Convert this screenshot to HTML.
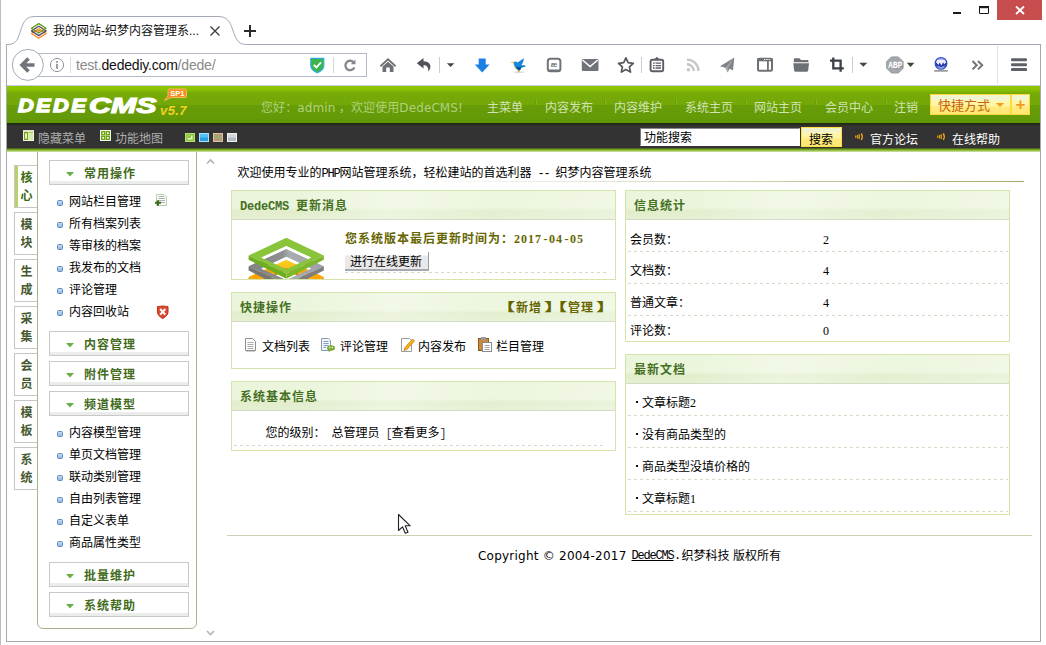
<!DOCTYPE html>
<html lang="zh-CN">
<head>
<meta charset="utf-8">
<title>我的网站-织梦内容管理系统 V57_UTF8_SP1</title>
<style>
*{box-sizing:border-box;margin:0;padding:0}
html,body{width:1046px;height:645px;overflow:hidden;background:#fff}
body{position:relative;font-family:"Liberation Sans","Noto Sans CJK SC",sans-serif;font-size:12px;color:#000;line-height:14px}
.a{position:absolute}
.t{position:absolute;white-space:nowrap;line-height:14px;height:14px}
a{color:inherit;text-decoration:none}
/* ---------- browser chrome ---------- */
#edgeL{left:0;top:0;width:1px;height:645px;background:#bdbdbd}
#winL{left:6px;top:44px;width:1px;height:598px;background:#a6aab0}
#winR{left:1040px;top:44px;width:1px;height:598px;background:#a6aab0}
#winB{left:6px;top:641px;width:1035px;height:1px;background:#a6aab0}
#navline{left:7px;top:85px;width:1033px;height:1px;background:#cdcde0}
#urlbar{left:30px;top:53px;width:337px;height:24px;border:1px solid #b4bcc8;background:#fff}
#tabtitle{left:53px;top:24px;font-size:12px;color:#111}
#url{left:76px;top:56px;font-size:14px;letter-spacing:-0.2px;line-height:18px;height:18px;color:#8a8a8a;font-family:"Liberation Sans",sans-serif}
#url b{font-weight:normal;color:#111}
/* ---------- page header ---------- */
#hd{left:7px;top:86px;width:1033px;height:37px;background:linear-gradient(#8ec700 0,#8cc400 3px,#7db205 6px,#75aa07 7px,#73a807 18.500px,#689d08 19.500px,#659a08 30px,#609508 37px)}
#bar{left:7px;top:123px;width:1033px;height:26px;background:linear-gradient(#212d0a 0,#222a12 1px,#2a2e22 2px,#333 3px,#333 100%)}
#barline{left:7px;top:148px;width:1033px;height:4px;background:linear-gradient(#3c5512,#86b52c 50%,#d5e8ae)}
.nav{color:#d3e4b4;font-size:12px;top:101px}
.navsep{top:99px;width:2px;height:6px;background:linear-gradient(90deg,#679c0a 50%,#82b51e 50%)}
.bart{top:133px;color:#fff}
.barg{top:132px;color:#adadad}

#logo1{left:18px;top:95px;height:22px;line-height:22px;font-size:18.500px;font-weight:bold;font-style:italic;color:#fff;-webkit-text-stroke:1.300px #fff;letter-spacing:2px;font-family:"Liberation Sans",sans-serif;transform:scaleX(1.180);transform-origin:0 0}
#logo2{left:89px;top:93px;height:26px;line-height:26px;font-size:22px;font-weight:bold;font-style:italic;color:#fff;-webkit-text-stroke:1.200px #fff;letter-spacing:0;font-family:"Liberation Sans",sans-serif;transform:scaleX(1.380);transform-origin:0 0}
#ver{left:160px;top:103px;height:15px;line-height:15px;font-size:13px;font-weight:bold;font-style:italic;color:#f4d21a;letter-spacing:0.400px;font-family:"Liberation Sans",sans-serif}
#hello{left:261px;top:101px;color:#b0d27c;letter-spacing:0.100px}
.vd{font-family:"DejaVu Sans","Liberation Sans",sans-serif}
.qk{top:94px;height:21px;border:1px solid #ffd83b;background:linear-gradient(#f2f3cf 0,#f2f3cf 5px,#fff7ae 6px,#fff3a0 11px,#ffe97c 12px,#ffe774 21px)}
#qkt{left:938px;top:99px;font-size:13px;color:#c8640c}
#qkarrow{left:996px;top:103px;width:0;height:0;border-left:4px solid transparent;border-right:4px solid transparent;border-top:4.500px solid #f39a1e}
#qkplus{left:1015.500px;top:97px;font-size:17px;line-height:16px;height:16px;font-weight:bold;color:#f39a1e;font-family:"Liberation Sans",sans-serif}
#sinput{left:640px;top:128px;width:160px;height:18px;background:#fff;border:1px solid #fff;border-left-color:#777;border-top-color:#8a8a8a}
#sinputt{left:644px;top:131px}
#sbtn{left:801px;top:127px;width:41px;height:20px;border:1px solid #ffdf47;background:linear-gradient(#eff2cd 0,#eff2cd 4px,#fff6ac 5px,#fff2a0 10px,#ffe97c 11px,#ffe670 20px)}
#sbtnt{left:809px;top:133px}
/* ---------- sidebar ---------- */
.tab{left:14px;width:23px;height:43px;border:1px solid #c6c6c6;border-right:none;background:#fff;color:#46582f;font-weight:bold;font-size:12px;line-height:18px;text-align:center;padding-top:3px;padding-left:1px;font-family:"Liberation Sans","Noto Sans CJK SC",sans-serif}
.tab.on{border-left:1px solid #c6c6c6;box-shadow:inset 3px 0 0 #b5d36a;color:#3a6a12}
#menu{left:37px;top:140px;width:160px;height:489px;border:1px solid #a8b48e;border-radius:0 0 6px 6px;background:#fff}
.mt{left:49px;width:140px;height:25px;border:1px solid #c9c9c9;background:linear-gradient(#fff 0,#fff 20px,#ebedeb 20px,#ebedeb 23px)}
.mt b{position:absolute;left:34px;top:6px;line-height:14px;font-size:12px;letter-spacing:1px;color:#436b1b;font-family:"Liberation Sans","Noto Sans CJK SC",sans-serif;font-weight:bold;white-space:nowrap}
.mt i{position:absolute;left:16px;top:11px;width:8px;height:4.500px;background:#6aae48;clip-path:polygon(0 0,100% 0,50% 100%)}
.mi{left:69px}
.bu{left:57px;width:6px;height:6px;border:1px solid #5f86b8;border-radius:1.500px;background:linear-gradient(#c4dcf7,#8fb8ea)}
/* ---------- main ---------- */
.pn{border:1px solid #d3e5ab;background:#fff}
.ph{left:0;top:0;right:0;height:29px;border-bottom:1px solid #d3dcc4;background:linear-gradient(115deg,rgba(255,255,255,0) 0,rgba(255,255,255,0) 18%,rgba(255,255,255,.350) 42%,rgba(255,255,255,.080) 68%,rgba(255,255,255,.300) 100%),linear-gradient(#ebf5dc 0,#ebf5dc 60%,#e1edcb 72%,#e4f0d1 100%)}
.ph b{position:absolute;left:8px;top:8px;line-height:14px;font-size:12px;letter-spacing:1px;color:#45701f;font-family:"Liberation Sans","Noto Sans CJK SC",sans-serif;font-weight:bold;white-space:nowrap}
.ph b.ol{color:#666600}
.ph b.lb{letter-spacing:0;transform:scaleX(1.800);transform-origin:11px 0}
.ph b.rb{letter-spacing:0;transform:scaleX(1.800);transform-origin:0.500px 0}
.sd{font-family:"Liberation Serif",serif;font-size:12px}
.sdb{font-family:"Liberation Serif",serif;font-size:12px;font-weight:bold;letter-spacing:1px}
.sdb i{display:inline-block;width:7px;text-align:center;font-style:normal;letter-spacing:0}
.dash{height:1px;background:repeating-linear-gradient(90deg,#d3dbc5 0,#d3dbc5 3px,transparent 3px,transparent 6px)}

#welcome{left:237.500px;top:166px}
#wline{left:237px;top:181px;width:787px;height:1px;background:linear-gradient(90deg,rgba(154,173,108,0) 0,rgba(154,173,108,0) 22%,rgba(154,173,108,.35) 50%,#9aad6c 100%)}
.ss{white-space:pre;font-family:"Liberation Mono","Noto Sans CJK SC",monospace;font-size:12px;letter-spacing:-1.200px}
.sb{white-space:pre;font-family:"Liberation Mono",monospace;font-size:12px;letter-spacing:-0.200px;font-weight:bold}
#upd{left:113px;top:41px;font-size:12px;font-weight:bold;letter-spacing:1px;color:#666600;font-family:"Liberation Sans","Noto Sans CJK SC",sans-serif}
#updbtn{left:113px;top:61px;width:84px;height:19px;line-height:14px;padding:3px 0 0 5px;background:linear-gradient(#fff 0,#fff 3px,#e9e9e9 4px,#e9e9e9 100%);border-right:1px solid #9a9ea4;border-bottom:2px solid #a6aab0;white-space:nowrap}
.dt{position:absolute;left:-6px;top:5px;width:2px;height:2px;background:#111}
#foot{left:478px;top:549px}
</style>
</head>
<body>
<!-- ================= BROWSER CHROME ================= -->
<div class="a" id="edgeL"></div>
<svg class="a" style="left:0;top:0" width="1046" height="90" viewBox="0 0 1046 90">
  <!-- tab strip line + tab outline -->
  <path d="M6.500 90V44.500H8C17 44.500 18 38 20.800 30C23.800 21 26 16.500 35 16.500H218C227 16.500 229.800 21 232.800 30C235.800 38 237 44.500 246.500 44.500H1040.500V90" fill="none" stroke="#a4aab4" stroke-width="1"/>
  <!-- favicon: three stacked diamonds -->
  <g fill="none" stroke-width="1.300" stroke-linejoin="round">
    <path d="M31.500 33.500L38.800 38.200L46.100 33.500L38.800 28.800Z" stroke="#f7861d"/>
    <path d="M31.500 30.900L38.800 35.600L46.100 30.900L38.800 26.200Z" stroke="#5b4a63"/>
    <path d="M31.500 28.300L38.800 33L46.100 28.300L38.800 23.600Z" stroke="#5f9a1a"/>
  </g>
  <path d="M36.500 30.800L38.800 29.600L41.100 30.800L38.800 32Z" fill="#f7941d"/>
  <!-- tab close, new tab -->
  <path d="M210.500 26.500L219.500 35.500M219.500 26.500L210.500 35.500" stroke="#3c3c3c" stroke-width="1.300" fill="none"/>
  <path d="M244 31H256M250 25V37" stroke="#2b2b2b" stroke-width="2" fill="none"/>
  <!-- window controls -->
  <rect x="953" y="12" width="8" height="2" fill="#1a1a1a"/>
  <path d="M979.500 7V13.500H988.500V7" fill="none" stroke="#1a1a1a" stroke-width="1"/>
  <rect x="979" y="6" width="10" height="2.200" fill="#1a1a1a"/>
  <rect x="997" y="0" width="45" height="20" fill="#c84d4f"/>
  <path d="M1016 6.500L1024 14M1024 6.500L1016 14" stroke="#fff" stroke-width="1.800" fill="none"/>
  <!-- url bar -->
  <rect x="30.500" y="53.500" width="336" height="23" fill="#fff" stroke="#b1bac6"/>
  <!-- back button -->
  <circle cx="27.800" cy="64.900" r="15.500" fill="#fff" stroke="#a2adbb" stroke-width="1"/>
  <path d="M34.500 65H23M28.500 58.500L22 65L28.500 71.500" fill="none" stroke="#70747b" stroke-width="3.600" stroke-linejoin="miter"/>
  <!-- identity (i) -->
  <circle cx="57" cy="65" r="6.600" fill="none" stroke="#90959d" stroke-width="1"/>
  <rect x="56.200" y="63.800" width="1.600" height="5" fill="#80858d"/><rect x="56.200" y="61" width="1.600" height="1.700" fill="#80858d"/>
  <rect x="70" y="57" width="1" height="16" fill="#dcdfe4"/>
  <!-- shield -->
  <path d="M310.800 58.300H323.800V65.500C323.800 69 320.500 71.300 317.300 72.800C314.100 71.300 310.800 69 310.800 65.500Z" fill="#3db54a" stroke="#29abe2" stroke-width="1.200" stroke-linejoin="round"/>
  <path d="M313.800 64.800L316.400 67.400L321 62.300" fill="none" stroke="#fff" stroke-width="1.800"/>
  <rect x="333" y="57" width="1" height="16" fill="#d3d6db"/>
  <!-- reload -->
  <path d="M353.600 62.300A4.700 4.700 0 1 0 354.400 67.400" fill="none" stroke="#85888e" stroke-width="2.300"/>
  <path d="M355.500 59.500V64.300H350.700Z" fill="#85888e"/>
  <!-- home -->
  <path d="M388 58L379.800 65.600L381 66.900L388 60.500L395 66.900L396.200 65.600Z" fill="#6d7075"/>
  <path d="M382.500 66.500L388 61.700L393.500 66.500V72H389.800V67.500H386.200V72H382.500Z" fill="#6d7075"/>
  <!-- undo -->
  <path d="M423.500 58L416.800 63.300L423.500 68.600V65.300C427 65.300 428.600 66.800 428.300 71.800C432.500 66.800 430.500 61.300 423.500 61.300Z" fill="#505359"/>
  <rect x="439" y="57" width="1" height="16" fill="#c9ccd1"/>
  <path d="M446.800 63.200H454.400L450.600 67Z" fill="#3f4a40"/>
  <!-- download arrow -->
  <path d="M478.700 58.500H485.700V64.500H489.600L482.200 72.500L474.800 64.500H478.700Z" fill="#1b7fe6"/>
  <!-- bird -->
  <ellipse cx="519" cy="72.200" rx="5.800" ry="0.900" fill="#dcdcdc"/>
  <path d="M513.500 62.300C514.500 61 516.300 61.200 517.500 62.600L523.900 58.200C523.700 61.300 522.700 63.500 521.300 65L525.600 65.400L525 67C523 67 521.600 67.500 520.800 68.600C520.700 70.200 519.500 70.800 518.300 70.200C515.300 68.800 513.800 66 513.500 62.300Z" fill="#1787da"/>
  <path d="M516 66.500C517.500 67.500 519.500 67.300 520.800 66.300L520.800 68.600C520.700 70.200 519.500 70.800 518.300 70.200C517 69.500 516.300 68.200 516 66.500Z" fill="#0c4e9a"/>
  <path d="M510 62.200L513.700 61.800L513.700 63.300Z" fill="#f6b52c"/>
  <path d="M514.200 65.500C514.800 67.500 516 69 517.800 70" fill="none" stroke="#9fd06a" stroke-width="0.800"/>
  <path d="M518.600 70.300L518.300 71.800L519.800 71.600" fill="none" stroke="#f3a623" stroke-width="0.900"/>
  <!-- ae dictionary -->
  <rect x="547.800" y="58.800" width="12.600" height="12.400" rx="2.500" fill="#fff" stroke="#707379" stroke-width="2"/>
  <rect x="548" y="69.600" width="12.200" height="2.200" rx="1" fill="#707379"/>
  <text x="554.100" y="67.200" font-size="7.500" font-family="Liberation Sans,sans-serif" font-weight="bold" fill="#707379" text-anchor="middle">æ</text>
  <!-- mail -->
  <rect x="581.800" y="59" width="16.700" height="12" rx="1.200" fill="#707379"/>
  <path d="M582.500 60L590.100 66.600L597.800 60" fill="none" stroke="#fff" stroke-width="1.500"/>
  <!-- star -->
  <path d="M625.900 57.800L628.100 62.700L633.300 63.300L629.400 66.900L630.500 72.100L625.900 69.500L621.300 72.100L622.400 66.900L618.500 63.300L623.700 62.700Z" fill="none" stroke="#55585e" stroke-width="1.700" stroke-linejoin="round"/>
  <rect x="641" y="57" width="1" height="16" fill="#c9ccd1"/>
  <!-- bookmarks list -->
  <path d="M656.900 56.800L660 59.800H653.800Z" fill="#5b5e64"/>
  <rect x="650.600" y="59.800" width="12.600" height="11.400" rx="1.800" fill="#fff" stroke="#5b5e64" stroke-width="1.900"/>
  <path d="M653 63.200H661M653 65.600H661M653 68H661" stroke="#5b5e64" stroke-width="1.300"/>
  <rect x="654.600" y="62.500" width="1" height="6.200" fill="#fff"/>
  <!-- rss -->
  <g fill="none" stroke="#c6c7ca" stroke-width="2.400">
    <path d="M687 59.600A11.500 11.500 0 0 1 698.500 71.100"/>
    <path d="M687 64.300A6.800 6.800 0 0 1 693.800 71.100"/>
  </g>
  <circle cx="688.400" cy="69.700" r="1.800" fill="#c6c7ca"/>
  <!-- paper plane -->
  <path d="M734.300 57.400L720 66.300L725.500 67.800L727.800 72.600L729.400 68.800L733 70.300Z" fill="#808388"/>
  <path d="M734.300 57.400L725.500 67.800L727.800 72.600L728 68Z" fill="#a5a7ab"/>
  <!-- sidebar window -->
  <rect x="758" y="58.800" width="14" height="12" rx="1.500" fill="#fff" stroke="#6d7075" stroke-width="2"/>
  <rect x="757.500" y="58" width="15" height="3.300" fill="#6d7075"/>
  <rect x="767" y="60" width="1.800" height="11" fill="#6d7075"/>
  <rect x="764" y="59" width="1.300" height="1" fill="#fff"/><rect x="766.300" y="59" width="1.300" height="1" fill="#fff"/><rect x="768.600" y="59" width="1.300" height="1" fill="#fff"/>
  <!-- folder -->
  <path d="M793.800 59.500C793.800 58.800 794.300 58.300 795 58.300H799.500L801 60H807.300C808 60 808.500 60.500 808.500 61.200V62.200H793.800Z" fill="#6d7075"/>
  <path d="M793.300 63.300H809L808.200 70.600C808.100 71.300 807.600 71.700 807 71.700H795.300C794.700 71.700 794.200 71.300 794.100 70.600Z" fill="#6d7075"/>
  <!-- crop -->
  <path d="M833.300 57.400V68.400H843.800M830 60.700H840.600V71.700" fill="none" stroke="#3b4048" stroke-width="2.300"/>
  <rect x="852" y="57" width="1" height="16" fill="#c9ccd1"/>
  <path d="M859.300 62.700H867.300L863.300 66.700Z" fill="#3f4a40"/>
  <!-- ABP -->
  <path d="M891.400 56.900H898.400L903.100 61.600V68.300L898.400 73H891.400L886.700 68.300V61.600Z" fill="#a3a7ab" stroke="#9a9ea2" stroke-width="1"/>
  <text x="888.700" y="68.900" font-size="9.500" font-family="Liberation Sans,sans-serif" font-weight="bold" fill="#74787c" textLength="13.800" lengthAdjust="spacingAndGlyphs">ABP</text>
  <text x="888.200" y="68.400" font-size="9.500" font-family="Liberation Sans,sans-serif" font-weight="bold" fill="#fff" stroke="#fff" stroke-width="0.350" textLength="13.800" lengthAdjust="spacingAndGlyphs">ABP</text>
  <path d="M906.800 62.800H914.400L910.600 67Z" fill="#3a4638"/>
  <!-- globe -->
  <circle cx="941" cy="63.400" r="5.800" fill="#eef1fa" stroke="#2f49c0" stroke-width="1.300"/>
  <path d="M935.800 62.300C936.900 62.800 937.700 64 938.300 65.100L939.800 62.600L941.300 65.400L943.200 62.200L944.300 64.400C945 63.400 945.700 62.800 946.300 62.600C946.400 64.500 945.800 66 944.800 67C943.500 66.300 942.300 66.600 941 67.300C939.700 66.600 938.500 66.300 937.200 67C936.200 66 935.600 64.400 935.800 62.300Z" fill="#2336ae"/>
  <path d="M937.200 67C938.500 66.300 939.700 66.600 941 67.300C942.300 66.600 943.500 66.300 944.800 67C943.800 68.200 942.500 68.800 941 68.800C939.500 68.800 938.200 68.200 937.200 67Z" fill="#8496e0"/>
  <path d="M936.500 60.500C937.500 58.800 939.300 58 941 58C942.700 58 944.500 58.800 945.500 60.500C944 59.800 942.500 59.600 941 59.600C939.500 59.600 938 59.800 936.500 60.500Z" fill="#7b90e0"/>
  <rect x="934.300" y="70.200" width="13.500" height="1.400" fill="#80838b"/>
  <!-- overflow chevrons -->
  <path d="M972.500 61L976.700 65.200L972.500 69.400M978 61L982.200 65.200L978 69.400" fill="none" stroke="#707379" stroke-width="2"/>
  <rect x="997" y="46" width="1" height="38" fill="#dfe1e5"/>
  <!-- hamburger -->
  <g fill="#5d6066"><rect x="1011" y="58.300" width="16" height="3" rx="1.200"/><rect x="1011" y="63.200" width="16" height="3" rx="1.200"/><rect x="1011" y="68.100" width="16" height="3" rx="1.200"/></g>
</svg>
<div class="a" id="winL"></div><div class="a" id="winR"></div><div class="a" id="winB"></div>
<div class="a" id="navline"></div>
<div class="t" id="tabtitle">我的网站-织梦内容管理系...</div>
<div class="t" id="url">test.<b>dedediy.com</b>/dede/</div>

<div class="a" id="menu"></div>
<!-- ================= PAGE HEADER ================= -->
<div class="a" id="hd"></div>
<div class="t" id="logo1">DEDE</div><div class="t" id="logo2">CMS</div>
<div class="t" id="ver">v5.7</div>
<svg class="a" style="left:160px;top:86px" width="30" height="16" viewBox="0 0 30 16">
  <path d="M9.700 3H25Q26.500 3 26.500 4.500V10Q26.500 11.500 25 11.500H11L4.500 14.500L8 9.800V4.500Q8 3 9.700 3Z" fill="#f58f1c" stroke="#f6b86a" stroke-width="1"/>
  <text x="17.400" y="10" font-size="7.500" font-weight="bold" font-family="Liberation Sans,sans-serif" fill="#fff" text-anchor="middle">SP1</text>
</svg>
<div class="t" id="hello">您好：<span class="vd">admin</span> ，欢迎使用<span class="vd">DedeCMS!</span></div>
<div class="t nav" style="left:487px">主菜单</div><div class="a navsep" style="left:535px"></div>
<div class="t nav" style="left:545px">内容发布</div><div class="a navsep" style="left:604px"></div>
<div class="t nav" style="left:614px">内容维护</div><div class="a navsep" style="left:675px"></div>
<div class="t nav" style="left:685px">系统主页</div><div class="a navsep" style="left:745px"></div>
<div class="t nav" style="left:754px">网站主页</div><div class="a navsep" style="left:815px"></div>
<div class="t nav" style="left:825px">会员中心</div><div class="a navsep" style="left:885px"></div>
<div class="t nav" style="left:894px">注销</div>
<div class="a qk" style="left:930px;width:81px"></div><div class="a qk" style="left:1011px;width:19px"></div>
<div class="t" id="qkt">快捷方式</div>
<div class="a" id="qkarrow"></div>
<div class="t" id="qkplus">+</div>
<div class="a" id="bar"></div>
<div class="a" id="barline"></div>
<svg class="a" style="left:22px;top:128px" width="220" height="16" viewBox="0 0 220 16">
  <rect x="1" y="2" width="11" height="11" fill="#f3f4e4"/>
  <rect x="1" y="2" width="11" height="2" fill="#dfe3c8"/>
  <rect x="2.600" y="4.600" width="2.800" height="6.800" fill="#fff" stroke="#6aa50e" stroke-width="1.200"/>
  <rect x="6.500" y="4" width="4.500" height="8" fill="#d6e9a9"/><rect x="6.500" y="4" width="4.500" height="1" fill="#a9cf55"/>
  <rect x="78" y="2" width="11" height="11" fill="#f6f7ec"/>
  <g fill="#fff" stroke="#6aa50e" stroke-width="1.300"><rect x="79.700" y="3.700" width="3" height="3"/><rect x="84.300" y="3.700" width="3" height="3"/><rect x="79.700" y="8.300" width="3" height="3"/><rect x="84.300" y="8.300" width="3" height="3"/></g>
  <rect x="163" y="5" width="10" height="9" fill="#8dc63f"/><rect x="163.500" y="5.500" width="9" height="8" fill="none" stroke="#b8de6f" stroke-width="1"/><rect x="165.500" y="7.500" width="5" height="4" fill="#e6f4c6"/><rect x="165.500" y="7.500" width="3.500" height="2.500" fill="#8dc63f"/>
  <rect x="177" y="5" width="10" height="9" fill="#2f9be0"/><rect x="177" y="5" width="10" height="4.500" fill="#55c3f2"/><rect x="177.500" y="5.500" width="9" height="8" fill="none" stroke="#a5e2fb" stroke-width="1"/>
  <rect x="191" y="5" width="10" height="9" fill="#b39a78"/><rect x="191" y="7.500" width="10" height="2.500" fill="#a5a873"/><rect x="191.500" y="5.500" width="9" height="8" fill="none" stroke="#dcc3a8" stroke-width="1"/>
  <rect x="205" y="5" width="10" height="9" fill="#b4bac2"/><rect x="205" y="5" width="10" height="4.500" fill="#d5d9de"/><rect x="205.500" y="5.500" width="9" height="8" fill="none" stroke="#f0f1f3" stroke-width="1"/>
</svg>
<div class="t barg" style="left:38px">隐藏菜单</div>
<div class="t barg" style="left:115px">功能地图</div>
<div class="a" id="sinput"></div><div class="t" id="sinputt">功能搜索</div>
<div class="a" id="sbtn"></div><div class="t" id="sbtnt">搜索</div>
<svg class="a" style="left:852px;top:130px" width="100" height="12" viewBox="0 0 100 12">
  <g fill="none" stroke="#f2a516" stroke-width="1.300"><path d="M7.200 4.300V9"/><path d="M9.300 3.300Q11.300 6.700 9.300 10"/></g><rect x="3" y="5.500" width="1.500" height="2.500" fill="#c98b14"/><rect x="5" y="5" width="1" height="3.500" fill="#e29a15"/>
  <g fill="none" stroke="#f2a516" stroke-width="1.300"><path d="M89.200 4.300V9"/><path d="M91.300 3.300Q93.300 6.700 91.300 10"/></g><rect x="85" y="5.500" width="1.500" height="2.500" fill="#c98b14"/><rect x="87" y="5" width="1" height="3.500" fill="#e29a15"/>
</svg>
<div class="t bart" style="left:870px">官方论坛</div>
<div class="t bart" style="left:952px">在线帮助</div>

<!-- ================= SIDEBAR ================= -->
<div class="a tab on" style="top:165px">核<br>心</div>
<div class="a tab" style="top:212px">模<br>块</div>
<div class="a tab" style="top:259px">生<br>成</div>
<div class="a tab" style="top:306px">采<br>集</div>
<div class="a tab" style="top:353px">会<br>员</div>
<div class="a tab" style="top:400px">模<br>板</div>
<div class="a tab" style="top:447px">系<br>统</div>
<div class="a mt" style="top:160px"><i></i><b>常用操作</b></div>
<div class="a mt" style="top:331px"><i></i><b>内容管理</b></div>
<div class="a mt" style="top:361px"><i></i><b>附件管理</b></div>
<div class="a mt" style="top:391px"><i></i><b>频道模型</b></div>
<div class="a mt" style="top:562px"><i></i><b>批量维护</b></div>
<div class="a mt" style="top:592px"><i></i><b>系统帮助</b></div>
<div class="a bu" style="top:200px"></div><div class="t mi" style="top:195px">网站栏目管理</div>
<div class="a bu" style="top:222px"></div><div class="t mi" style="top:217px">所有档案列表</div>
<div class="a bu" style="top:244px"></div><div class="t mi" style="top:239px">等审核的档案</div>
<div class="a bu" style="top:266px"></div><div class="t mi" style="top:261px">我发布的文档</div>
<div class="a bu" style="top:288px"></div><div class="t mi" style="top:283px">评论管理</div>
<div class="a bu" style="top:310px"></div><div class="t mi" style="top:305px">内容回收站</div>
<div class="a bu" style="top:431px"></div><div class="t mi" style="top:426px">内容模型管理</div>
<div class="a bu" style="top:453px"></div><div class="t mi" style="top:448px">单页文档管理</div>
<div class="a bu" style="top:475px"></div><div class="t mi" style="top:470px">联动类别管理</div>
<div class="a bu" style="top:497px"></div><div class="t mi" style="top:492px">自由列表管理</div>
<div class="a bu" style="top:519px"></div><div class="t mi" style="top:514px">自定义表单</div>
<div class="a bu" style="top:541px"></div><div class="t mi" style="top:536px">商品属性类型</div>
<svg class="a" style="left:154px;top:192px" width="18" height="130" viewBox="0 0 18 130">
  <!-- add-document icon -->
  <path d="M2.500 2.500H10L12.500 5V13.500H2.500Z" fill="#fbfdf8" stroke="#bccfa6" stroke-width="1"/>
  <path d="M4.500 4.500H10M4.500 6.500H11M4.500 8.500H11M6 10.500H11" stroke="#a3a8b2" stroke-width="0.900"/>
  <path d="M1 10.800H7M4 8.200V13.700" stroke="#3b6a18" stroke-width="2"/>
  <!-- recycle shield icon -->
  <path d="M3.500 114.500C6 114.500 7.500 114 8.700 114C10 114 11.500 114.500 14 114.500V120C14 123 11.500 125 8.700 126.600C6 125 3.500 123 3.500 120Z" fill="#dc4a30" stroke="#b8301f" stroke-width="1"/>
  <path d="M6.200 117L11.300 122.600M11.300 117L6.200 122.600" stroke="#fff" stroke-width="1.900"/>
</svg>
<svg class="a" style="left:204px;top:154px" width="14" height="490" viewBox="0 0 14 490">
  <path d="M3 9.500L6.500 6L10 9.500" fill="none" stroke="#b4b4b4" stroke-width="1.600"/>
  <path d="M3 477L6.500 480.500L10 477" fill="none" stroke="#b4b4b4" stroke-width="1.600"/>
</svg>

<!-- ================= MAIN ================= -->
<div class="t" id="welcome">欢迎使用专业的<span class="ss">PHP</span>网站管理系统，轻松建站的首选利器<span class="ss"> -- </span>织梦内容管理系统</div>
<div class="a" id="wline"></div>
<!-- left column -->
<div class="a pn" style="left:231px;top:190px;width:385px;height:90px;overflow:hidden">
  <div class="a ph"><b><span class="sb">DedeCMS </span>更新消息</b></div>
  <svg class="a" style="left:16px;top:46px" width="78" height="50" viewBox="248 237 78 50">
<defs><linearGradient id="gg" x1="0" x2="1" y1="0" y2="0"><stop offset="0" stop-color="#828282"/><stop offset="0.45" stop-color="#8e8f91"/><stop offset="0.55" stop-color="#a9adb3"/><stop offset="1" stop-color="#9da1a7"/></linearGradient><linearGradient id="go" x1="0" x2="0" y1="0" y2="1"><stop offset="0" stop-color="#f7d11f"/><stop offset="0.22" stop-color="#f9c318"/><stop offset="0.3" stop-color="#ffa600"/><stop offset="1" stop-color="#ffa200"/></linearGradient></defs>
<clipPath id="co"><path d="M286.3 267.5 L311.2 279.1 L286.3 290.7 L261.2 279.1Z"/></clipPath>
<path fill-rule="evenodd" d="M286.3 259.2 L323.8 277.0 L286.3 295.0 L248.6 277.0Z M286.3 267.5 L261.2 279.1 L286.3 290.7 L311.2 279.1Z" fill="url(#go)"/>
<path clip-path="url(#co)" d="M261.2 279.1 L286.3 267.5 L311.2 279.1 L311.2 282.1 L286.3 270.5 L261.2 282.1Z" fill="#d98800"/>
<path d="M248.6 277.0 L286.3 295.0 L286.3 300.2 L248.6 281.2Z" fill="#e89300"/>
<path d="M323.8 277.0 L286.3 295.0 L286.3 300.2 L323.8 281.2Z" fill="#f09a00"/>
<clipPath id="cy"><path d="M286.3 256.8 L311.2 268.4 L286.3 280.0 L261.2 268.4Z"/></clipPath>
<path fill-rule="evenodd" d="M286.3 248.5 L323.8 266.3 L286.3 284.3 L248.6 266.3Z M286.3 256.8 L261.2 268.4 L286.3 280.0 L311.2 268.4Z" fill="url(#gg)"/>
<path clip-path="url(#cy)" d="M261.2 268.4 L286.3 256.8 L311.2 268.4 L311.2 271.4 L286.3 259.8 L261.2 271.4Z" fill="#fff"/>
<path d="M248.6 266.3 L286.3 284.3 L286.3 289.5 L248.6 270.5Z" fill="#767676"/>
<path d="M323.8 266.3 L286.3 284.3 L286.3 289.5 L323.8 270.5Z" fill="#7e7e7e"/>
<clipPath id="cn"><path d="M286.3 246.0 L311.2 257.6 L286.3 269.2 L261.2 257.6Z"/></clipPath>
<path fill-rule="evenodd" d="M286.3 237.7 L323.8 255.5 L286.3 273.5 L248.6 255.5Z M286.3 246.0 L261.2 257.6 L286.3 269.2 L311.2 257.6Z" fill="#8ac43a"/>
<path clip-path="url(#cn)" d="M261.2 257.6 L286.3 246.0 L311.2 257.6 L311.2 260.6 L286.3 249.0 L261.2 260.6Z" fill="#fff"/>
<path d="M248.6 255.5 L286.3 273.5 L286.3 278.7 L248.6 259.7Z" fill="#6fae20"/>
<path d="M323.8 255.5 L286.3 273.5 L286.3 278.7 L323.8 259.7Z" fill="#7bb82a"/>
</svg>
  <div class="t" id="upd">您系统版本最后更新时间为：<span class="sdb">2017<i>-</i>04<i>-</i>05</span></div>
  <div class="a" id="updbtn">进行在线更新</div>
  <div class="a dash" style="left:113px;top:81px;width:262px"></div>
</div>
<div class="a pn" style="left:231px;top:292px;width:385px;height:77px">
  <div class="a ph"><b>快捷操作</b><b class="ol lb" style="left:271.400px">【</b><b class="ol" style="left:284px">新增</b><b class="ol rb" style="left:311.500px">】</b><b class="ol lb" style="left:323.200px">【</b><b class="ol" style="left:336px">管理</b><b class="ol rb" style="left:363.500px">】</b></div>
  <svg class="a" style="left:12px;top:43px" width="260" height="18" viewBox="0 0 260 18">
    <!-- doc -->
    <path d="M1.500 2.500H8.500L11.500 5.500V14.500H1.500Z" fill="#fcfcfc" stroke="#8f8f8f" stroke-width="1"/>
    <path d="M3.500 6.500H9.500M3.500 8.500H9.500M3.500 10.500H9.500M3.500 12.500H9.500" stroke="#a2a2a2" stroke-width="0.900"/>
    <path d="M2 15.500H11" stroke="#c9d2c0" stroke-width="1"/>
    <!-- doc + comment -->
    <path d="M77.500 2.500H84.500L86.500 4.500V14.500H77.500Z" fill="#f2f6fb" stroke="#8c9cb0" stroke-width="1"/>
    <path d="M79.500 5.500H84.500M79.500 7.500H84.500M79.500 9.500H84.500M79.500 11.500H82" stroke="#6f93c8" stroke-width="0.900"/>
    <ellipse cx="87" cy="12" rx="4" ry="2.800" fill="#7aa834"/><ellipse cx="85.800" cy="11.500" rx="1" ry="0.800" fill="#d6e8a8"/><ellipse cx="88.300" cy="11.500" rx="1" ry="0.800" fill="#d6e8a8"/><path d="M85 14L84.500 16L87.500 14.600Z" fill="#7aa834"/>
    <!-- edit -->
    <path d="M157.500 2.500H165.500L167.500 4.500V15.500H157.500Z" fill="#fff" stroke="#9a9a9a" stroke-width="1"/>
    <path d="M168.500 3L170.500 5L163 13.500L160 14.500L161 11.500Z" fill="#f4b11c" stroke="#c98212" stroke-width="0.800"/>
    <!-- clipboard -->
    <rect x="234.500" y="2.500" width="10" height="12" fill="#c98a3c" stroke="#8b5a20" stroke-width="1"/>
    <rect x="237" y="1" width="5" height="3" fill="#9b9b9b"/>
    <rect x="238.500" y="6.500" width="9" height="9" fill="#fff" stroke="#8a8a8a" stroke-width="1"/>
    <path d="M240.500 9.500H245.500M240.500 11.500H245.500M240.500 13.500H245.500" stroke="#9a9a9a" stroke-width="0.900"/>
  </svg>
  <div class="t" style="left:30px;top:47px">文档列表</div>
  <div class="t" style="left:108px;top:47px">评论管理</div>
  <div class="t" style="left:186px;top:47px">内容发布</div>
  <div class="t" style="left:264px;top:47px">栏目管理</div>
</div>
<div class="a pn" style="left:231px;top:381px;width:385px;height:70px">
  <div class="a ph"><b>系统基本信息</b></div>
  <div class="t" style="left:33.500px;top:44px">您的级别：<span class="ss"> </span>总管理员<span class="ss" style="color:#444"> [</span>查看更多<span class="ss" style="color:#444">]</span></div>
  <div class="a dash" style="left:2px;top:63px;width:372px"></div>
</div>
<!-- right column -->
<div class="a pn" style="left:625px;top:190px;width:385px;height:152px">
  <div class="a ph"><b>信息统计</b></div>
  <div class="t" style="left:4px;top:42px">会员数：</div><div class="t sd" style="left:197px;top:42px">2</div>
  <div class="a dash" style="left:2px;top:60px;width:380px"></div>
  <div class="t" style="left:4px;top:73px">文档数：</div><div class="t sd" style="left:197px;top:73px">4</div>
  <div class="a dash" style="left:2px;top:92px;width:380px"></div>
  <div class="t" style="left:4px;top:105px">普通文章：</div><div class="t sd" style="left:197px;top:105px">4</div>
  <div class="a dash" style="left:2px;top:124px;width:380px"></div>
  <div class="t" style="left:4px;top:133px">评论数：</div><div class="t sd" style="left:197px;top:133px">0</div>
</div>
<div class="a pn" style="left:625px;top:354px;width:385px;height:161px">
  <div class="a ph"><b>最新文档</b></div>
  <div class="t" style="left:16px;top:41px"><i class="dt"></i>文章标题<span class="sd">2</span></div>
  <div class="a dash" style="left:2px;top:60px;width:380px"></div>
  <div class="t" style="left:16px;top:73px"><i class="dt"></i>没有商品类型的</div>
  <div class="a dash" style="left:2px;top:92px;width:380px"></div>
  <div class="t" style="left:16px;top:105px"><i class="dt"></i>商品类型没填价格的</div>
  <div class="a dash" style="left:2px;top:124px;width:380px"></div>
  <div class="t" style="left:16px;top:137px"><i class="dt"></i>文章标题<span class="sd">1</span></div>
  <div class="a dash" style="left:2px;top:156px;width:380px"></div>
</div>
<!-- footer -->
<div class="a" style="left:227px;top:535px;width:805px;height:1px;background:#c9d3b4"></div>
<div class="t vd" style="left:478px;top:549px;letter-spacing:0.230px">Copyright © 2004-2017</div>
<div class="t ss" style="left:631.500px;top:549px;text-decoration:underline">DedeCMS</div>
<div class="t ss" style="left:674px;top:549px">.</div>
<div class="t" style="left:681.500px;top:549px">织梦科技</div>
<div class="t" style="left:733px;top:549px">版权所有</div>
<!-- mouse cursor -->
<svg class="a" style="left:397px;top:513px" width="16" height="24" viewBox="0 0 16 24">
  <path d="M1.500 1.500V17.500L5.500 13.800L8.300 20.300L11 19.200L8.200 12.800H13.200Z" fill="#fff" stroke="#222" stroke-width="1.100" stroke-linejoin="round"/>
</svg>

</body>
</html>
